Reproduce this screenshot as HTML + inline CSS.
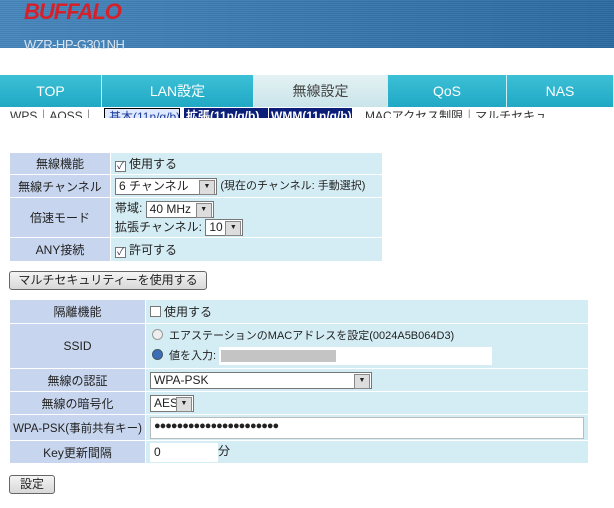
<!DOCTYPE html>
<html><head><meta charset="utf-8"><style>
*{margin:0;padding:0;box-sizing:border-box}
body{width:614px;height:508px;background:#fff;position:relative;overflow:hidden;font-family:"Liberation Sans","Noto Sans CJK JP",sans-serif;font-size:12px;color:#222}
.hdr{position:absolute;left:0;top:0;width:614px;height:48px;background:repeating-linear-gradient(180deg,#3a7fb8 0 1px,#2f72ab 1px 2px);background-color:#3176ae}
.hdr:after{content:"";position:absolute;inset:0;background:linear-gradient(90deg,rgba(255,255,255,0.1),rgba(0,0,0,0.1))}
.logo{position:absolute;left:24px;top:-1px;font:italic bold 22px "Liberation Sans",sans-serif;color:#d6202a;letter-spacing:-1px;z-index:2}
.model{position:absolute;left:24px;top:37px;font-size:13px;color:#d8e4f0;z-index:2;letter-spacing:-0.5px}
.tab{position:absolute;top:75px;height:32px;background:linear-gradient(#3cc0d6,#20a8c4);color:#fff;font-size:14px;text-align:center;line-height:32px;border-right:1px solid #cfeef3}
.tab.act{background:linear-gradient(#e4f2f4,#c9e4ea);color:#444}
.sub{position:absolute;top:107px;left:0;width:614px;height:11px;overflow:hidden;background:#fff}
.sub span{position:absolute;top:1px;font-size:13px;line-height:16px;white-space:nowrap;overflow:hidden}
table{position:absolute;border-collapse:collapse}
td{border:1px solid #fff;padding:0 4px;font-size:12px}
td.l{background:#c7d5ee;text-align:center}
td.v{background:#d4ecf3}
.cb{display:inline-block;width:11px;height:11px;border:1px solid #777;background:#fff;vertical-align:-1px;margin-right:3px;font-size:10px;line-height:9px;text-align:center;color:#335}
.sel{display:inline-block;border:1px solid #777;background:#fff;height:17px;line-height:15px;padding-left:3px;vertical-align:middle;position:relative;font-size:12px}
.sel:after{content:"▼";position:absolute;right:1px;top:1px;width:14px;height:13px;background:#ddd;border:1px solid #888;font-size:7px;line-height:12px;text-align:center}
.inp{display:inline-block;background:#fff;border:1px solid #bbb;height:19px;vertical-align:middle;line-height:17px;padding-left:3px}
.btn{position:absolute;border:1px solid #666;border-radius:3px;background:linear-gradient(#f4f4f4,#d8d8d8);font-size:12px;text-align:center}
.rad{display:inline-block;width:11px;height:11px;border-radius:50%;border:1px solid #999;background:#eee;vertical-align:-1px;margin:0 6px 0 2px}
</style></head><body>
<div class="hdr"></div>
<div class="logo">BUFFALO</div>
<div class="model">WZR-HP-G301NH</div>
<div class="tab" style="left:0;width:102px">TOP</div>
<div class="tab" style="left:102px;width:152px">LAN設定</div>
<div class="tab act" style="left:254px;width:134px">無線設定</div>
<div class="tab" style="left:388px;width:119px">QoS</div>
<div class="tab" style="left:507px;width:107px">NAS</div>
<div class="sub">
<span style="left:10px;color:#333;font-size:12px">WPS｜AOSS｜</span>
<span style="left:104px;width:76px;color:#1d3b9c;border:1px solid #000;border-bottom:none;padding:0 4px;background:#dfe9ff;font-size:12px">基本(11n/g/b)</span>
<span style="left:184px;width:84px;background:#0b1f7a;color:#fff;font-weight:bold;padding:0 2px;font-size:12px">拡張(11n/g/b)</span>
<span style="left:269px;width:83px;background:#0b1f7a;color:#fff;font-weight:bold;padding:0 2px;font-size:12px">WMM(11n/g/b)</span>
<span style="left:365px;color:#333;font-size:12px">MACアクセス制限｜マルチセキュ</span>
</div>

<table style="left:9px;top:152px;width:374px">
<tr style="height:22px"><td class="l" style="width:101px">無線機能</td><td class="v"><span class="cb">✓</span>使用する</td></tr>
<tr style="height:23px"><td class="l">無線チャンネル</td><td class="v"><span class="sel" style="width:102px">6 チャンネル</span> <span style="font-size:11px">(現在のチャンネル: 手動選択)</span></td></tr>
<tr style="height:40px"><td class="l">倍速モード</td><td class="v" style="line-height:18px">帯域: <span class="sel" style="width:68px">40 MHz</span><br>拡張チャンネル: <span class="sel" style="width:38px">10</span></td></tr>
<tr style="height:24px"><td class="l">ANY接続</td><td class="v"><span class="cb">✓</span>許可する</td></tr>
</table>
<div class="btn" style="left:9px;top:271px;width:198px;height:19px;line-height:17px">マルチセキュリティーを使用する</div>

<table style="left:9px;top:299px;width:580px">
<tr style="height:24px"><td class="l" style="width:136px">隔離機能</td><td class="v"><span class="cb"></span>使用する</td></tr>
<tr style="height:45px"><td class="l">SSID</td><td class="v" style="font-size:11px;line-height:20px"><span class="rad"></span>エアステーションのMACアドレスを設定(0024A5B064D3)<br><span class="rad" style="background:#3a6fb8;border-color:#456"></span>値を入力: <span class="inp" style="width:273px;height:18px;padding:2px 1px;border-color:#fff"><span style="display:block;width:115px;height:12px;background:#c4c4c4"></span></span></td></tr>
<tr style="height:23px"><td class="l">無線の認証</td><td class="v"><span class="sel" style="width:222px">WPA-PSK</span></td></tr>
<tr style="height:23px"><td class="l">無線の暗号化</td><td class="v"><span class="sel" style="width:44px">AES</span></td></tr>
<tr style="height:26px"><td class="l" style="font-size:11.5px;padding:0 2px">WPA-PSK(事前共有キー)</td><td class="v"><span class="inp" style="width:434px;height:22px;font-size:11px;letter-spacing:-1px">●●●●●●●●●●●●●●●●●●●●●●</span></td></tr>
<tr style="height:23px"><td class="l">Key更新間隔</td><td class="v"><span class="inp" style="width:68px;border-color:#fff">0</span>分</td></tr>
</table>
<div class="btn" style="left:9px;top:475px;width:46px;height:19px;line-height:17px">設定</div>
</body></html>
